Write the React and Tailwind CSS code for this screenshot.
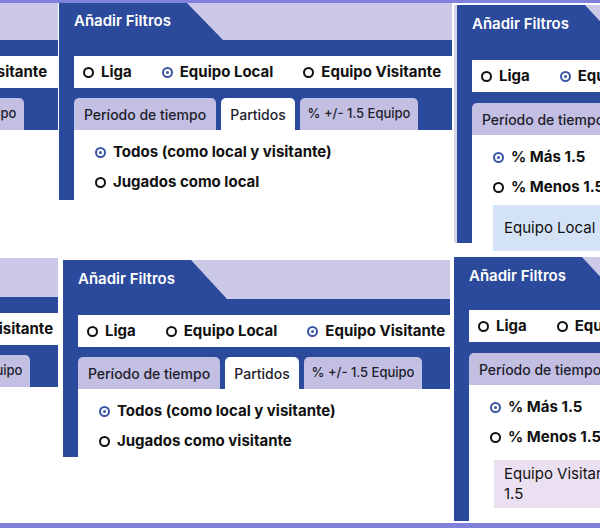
import React from 'react';

const font = { fontFamily: 'Inter, "Noto Sans", sans-serif' };

function Radio({ on }) {
  if (on) {
    return (
      <span className="w-[11px] h-[11px] rounded-full border-2 border-[#3b55a6] flex items-center justify-center shrink-0">
        <span className="w-[3px] h-[3px] rounded-full bg-[#3b55a6]" />
      </span>
    );
  }
  return <span className="w-[11px] h-[11px] rounded-full border-2 border-[#111] shrink-0" />;
}

function Option({ on, label }) {
  return (
    <div className="flex items-center gap-[7px] whitespace-nowrap">
      <Radio on={on} />
      <span className="text-[15px] font-bold text-[#111]">{label}</span>
    </div>
  );
}

// un panel "Añadir Filtros" tel qu'il apparaît dans la capture
function FilterPanel({ box, headerH, bandH, gapH, side, tab, match, info }) {
  return (
    <div className={`flex flex-col bg-[#2c4a9b] shrink-0 ${box}`}>
      <div className={`flex shrink-0 ${headerH}`}>
        <div className="w-[128px] shrink-0 pl-[15px] flex items-center text-white font-semibold text-[15px] whitespace-nowrap">
          Añadir Filtros
        </div>
        <div className="flex-1 bg-[#cbc9e7] [clip-path:polygon(0_0,100%_0,100%_100%,36px_100%)]" />
      </div>
      <div className={`shrink-0 ${bandH}`} />
      <div className="ml-[15px] h-[32px] shrink-0 bg-white flex items-center pl-[9px] gap-[30px]">
        <Option on={false} label="Liga" />
        <Option on={side === 'local'} label="Equipo Local" />
        <Option on={side === 'visit'} label="Equipo Visitante" />
      </div>
      <div className={`shrink-0 ${gapH}`} />
      <div className="ml-[15px] h-[32px] shrink-0 flex gap-[5px] text-[14px] font-medium text-[#1d1d2b] whitespace-nowrap">
        <div className={`w-[142px] shrink-0 rounded-t-[5px] flex items-center justify-center ${tab === 0 ? 'bg-white' : 'bg-[#c2bfe2]'}`}>Período de tiempo</div>
        <div className={`w-[74px] shrink-0 rounded-t-[5px] flex items-center justify-center ${tab === 1 ? 'bg-white' : 'bg-[#c2bfe2]'}`}>Partidos</div>
        <div className={`w-[118px] shrink-0 rounded-t-[5px] flex items-center justify-center text-[13px] ${tab === 2 ? 'bg-white' : 'bg-[#c2bfe2]'}`}>% +/- 1.5 Equipo</div>
      </div>
      <div className="ml-[15px] flex-1 bg-white pt-[7px] pl-[21px]">
        {tab === 1 ? (
          <>
            <div className="h-[30px] flex items-center"><Option on label="Todos (como local y visitante)" /></div>
            <div className="h-[30px] flex items-center"><Option on={false} label={match} /></div>
          </>
        ) : (
          <>
            <div className="h-[30px] flex items-center"><Option on label="% Más 1.5" /></div>
            <div className="h-[30px] flex items-center"><Option on={false} label="% Menos 1.5" /></div>
            {info}
          </>
        )}
      </div>
    </div>
  );
}

export default function App() {
  return (
    <div style={font} className="w-[600px] h-[528px] overflow-hidden bg-white flex flex-col">
      <div className="h-[3px] shrink-0 bg-[#7f81da]" />

      {/* rangée du haut */}
      <div className="h-[254px] shrink-0 flex items-start">
        <div className="w-[58px] shrink-0 overflow-hidden">
          <div className="ml-[-335px]">
            <FilterPanel box="w-[393px] h-[197px]" headerH="h-[37px]" bandH="h-[16px]" gapH="h-[10px]" side="local" tab={1} match="Jugados como local" />
          </div>
        </div>
        <div className="ml-[1px]">
          <FilterPanel box="w-[393px] h-[197px]" headerH="h-[37px]" bandH="h-[16px]" gapH="h-[10px]" side="local" tab={1} match="Jugados como local" />
        </div>
        <div className="ml-[2px] mt-[2px] border-l-[3px] border-[#d6d4ea]">
          <FilterPanel
            box="w-[400px] h-[238px]"
            headerH="h-[39px]"
            bandH="h-[16px]"
            gapH="h-[11px]"
            side="local"
            tab={2}
            info={
              <div className="mt-[3px] h-[46px] w-[220px] bg-[#d3e3f5] flex items-center pl-[11px] text-[15px] text-[#111] whitespace-nowrap">
                Equipo Local - % Más 1.5
              </div>
            }
          />
        </div>
      </div>

      {/* rangée du bas */}
      <div className="h-[266px] shrink-0 flex items-start">
        <div className="w-[58px] mt-[1px] shrink-0 overflow-hidden">
          <div className="ml-[-329px]">
            <FilterPanel box="w-[387px] h-[197px]" headerH="h-[39px]" bandH="h-[16px]" gapH="h-[10px]" side="visit" tab={1} match="Jugados como visitante" />
          </div>
        </div>
        <div className="ml-[5px] mt-[3px]">
          <FilterPanel box="w-[387px] h-[197px]" headerH="h-[39px]" bandH="h-[16px]" gapH="h-[10px]" side="visit" tab={1} match="Jugados como visitante" />
        </div>
        <div className="ml-[4px]">
          <FilterPanel
            box="w-[400px] h-[264px]"
            headerH="h-[39px]"
            bandH="h-[14px]"
            gapH="h-[11px]"
            side="visit"
            tab={2}
            info={
              <div className="mt-[8px] ml-[4px] h-[48px] w-[220px] bg-[#ebe0f1] flex flex-col justify-center pl-[10px] text-[15px] leading-[20px] text-[#111] whitespace-nowrap">
                <span>Equipo Visitante - % Más</span>
                <span>1.5</span>
              </div>
            }
          />
        </div>
      </div>

      <div className="flex-1 bg-[#7f81da]" />
    </div>
  );
}
